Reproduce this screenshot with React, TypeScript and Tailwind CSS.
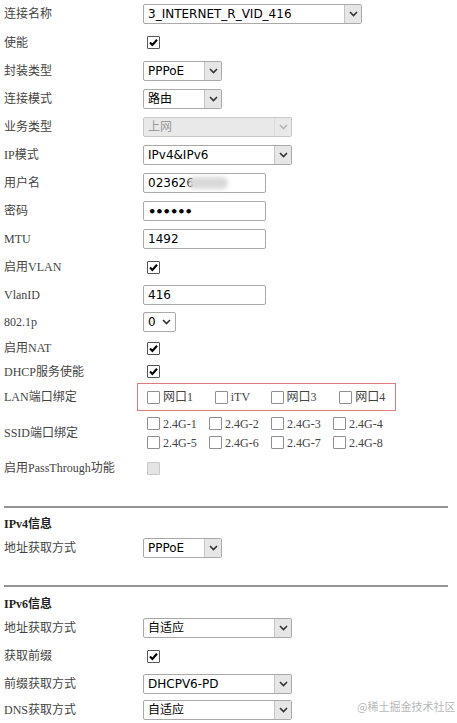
import React from "react";

const labelFont = {
  fontFamily: '"Liberation Serif", "Noto Sans CJK SC", serif',
};
const ctrlFont = {
  fontFamily: '"DejaVu Sans", "Noto Sans CJK SC", sans-serif',
};

function Chevron({ color = "#333" }: { color?: string }) {
  return (
    <svg width="9" height="6" viewBox="0 0 9 6">
      <path d="M1 1 L4.5 4.5 L8 1" fill="none" stroke={color} strokeWidth="1.6" />
    </svg>
  );
}

function Select(props: { value: string; width: string; disabled?: boolean }) {
  return (
    <div
      className={
        "flex h-[20px] items-stretch rounded-[2px] border " +
        props.width +
        (props.disabled
          ? " border-[#c8c8c8] bg-[#e9e9e9] text-[#9a9a9a]"
          : " border-[#a9a9a9] bg-white text-black")
      }
      style={ctrlFont}
    >
      <div className="flex flex-1 items-center pl-[4px] text-[12px] leading-none">
        {props.value}
      </div>
      <div
        className={
          "flex w-[17px] items-center justify-center border-l " +
          (props.disabled
            ? "border-[#dcdcdc] bg-[#e9e9e9]"
            : "border-[#c4c4c4] bg-[#e6e6e6]")
        }
      >
        <Chevron color={props.disabled ? "#b5b5b5" : "#333"} />
      </div>
    </div>
  );
}

function Input(props: { value: string; children?: React.ReactNode }) {
  return (
    <div
      className="relative flex h-[20px] w-[123px] items-center rounded-[2px] border border-[#a9a9a9] bg-white pl-[4px] text-[12px] leading-none text-black"
      style={ctrlFont}
    >
      {props.value}
      {props.children}
    </div>
  );
}

function Check(props: { checked?: boolean; disabled?: boolean; light?: boolean }) {
  const cls = props.disabled
    ? "border-[#c9c9c9] bg-[#e4e4e4]"
    : props.light
    ? "border-[#8f8f8f] bg-white"
    : "border-[#555] bg-white";
  return (
    <div
      className={
        "flex h-[13px] w-[13px] shrink-0 items-center justify-center rounded-[1px] border " +
        cls
      }
    >
      {props.checked && (
        <svg width="11" height="11" viewBox="0 0 11 11">
          <path
            d="M2 5.6 L4.4 8 L9 2.8"
            fill="none"
            stroke="#000"
            strokeWidth="2.1"
          />
        </svg>
      )}
    </div>
  );
}

function Row(props: { label: string; h: string; children?: React.ReactNode; bold?: boolean }) {
  return (
    <div className={"flex items-center " + props.h}>
      <div
        className={
          "w-[139px] shrink-0 text-[12px] " +
          (props.bold ? "font-bold text-[#222]" : "text-[#444]")
        }
        style={labelFont}
      >
        {props.label}
      </div>
      {props.children}
    </div>
  );
}

function BoxItem(props: { label: string; w: string }) {
  return (
    <div className={"flex items-center gap-[3px] " + props.w}>
      <Check light />
      <span className="text-[12px] text-[#444]" style={labelFont}>
        {props.label}
      </span>
    </div>
  );
}

export default function App() {
  const ssid = ["1", "2", "3", "4", "5", "6", "7", "8"];
  return (
    <div className="relative h-[723px] w-[457px] overflow-hidden bg-white pl-[4px]">
      <Row label="连接名称" h="h-[28px]">
        <Select value="3_INTERNET_R_VID_416" width="w-[219px]" />
      </Row>
      <Row label="使能" h="h-[29px]">
        <div className="pl-[4px]">
          <Check checked />
        </div>
      </Row>
      <Row label="封装类型" h="h-[28px]">
        <Select value="PPPoE" width="w-[79px]" />
      </Row>
      <Row label="连接模式" h="h-[28px]">
        <Select value="路由" width="w-[79px]" />
      </Row>
      <Row label="业务类型" h="h-[28px]">
        <Select value="上网" width="w-[149px]" disabled />
      </Row>
      <Row label="IP模式" h="h-[28px]">
        <Select value="IPv4&IPv6" width="w-[149px]" />
      </Row>
      <Row label="用户名" h="h-[28px]">
        <Input value="023626">
          <span className="absolute left-[44px] top-[3px] h-[12px] w-[40px] rounded-full bg-[#d9d9d9] blur-[2px]" />
        </Input>
      </Row>
      <Row label="密码" h="h-[28px]">
        <Input value="">
          <span
            className="text-[13px] font-bold tracking-[-1px]"
            style={{ fontFamily: '"DejaVu Sans", sans-serif' }}
          >
            ••••••
          </span>
        </Input>
      </Row>
      <Row label="MTU" h="h-[28px]">
        <Input value="1492" />
      </Row>
      <Row label="启用VLAN" h="h-[28px]">
        <div className="pl-[4px]">
          <Check checked />
        </div>
      </Row>
      <Row label="VlanID" h="h-[27px]">
        <Input value="416" />
      </Row>
      <Row label="802.1p" h="h-[28px]">
        <div
          className="flex h-[20px] w-[33px] items-center gap-[6px] rounded-[2px] border border-[#a9a9a9] bg-white pl-[4px] text-[12px] leading-none"
          style={ctrlFont}
        >
          0
          <Chevron />
        </div>
      </Row>
      <Row label="启用NAT" h="h-[24px]">
        <div className="pl-[4px]">
          <Check checked />
        </div>
      </Row>
      <Row label="DHCP服务使能" h="h-[23px]">
        <div className="pl-[4px]">
          <Check checked />
        </div>
      </Row>
      <Row label="LAN端口绑定" h="h-[28px]">
        <div className="-ml-[6px] flex h-[28px] w-[259px] items-center border border-[#e07b7b] pl-[9px]">
          <BoxItem label="网口1" w="w-[68px]" />
          <BoxItem label="iTV" w="w-[56px]" />
          <BoxItem label="网口3" w="w-[69px]" />
          <BoxItem label="网口4" w="w-[56px]" />
        </div>
      </Row>
      <Row label="SSID端口绑定" h="h-[43px]">
        <div className="grid grid-cols-[62px_62px_62px_62px] pl-[4px] pt-[2px]">
          {ssid.map((n) => (
            <div key={n} className="h-[19px]">
              <BoxItem label={"2.4G-" + n} w="w-[62px]" />
            </div>
          ))}
        </div>
      </Row>
      <Row label="启用PassThrough功能" h="h-[28px]">
        <div className="pl-[4px]">
          <Check disabled />
        </div>
      </Row>

      <div className="mt-[24px] h-[2px] w-[444px] bg-[#959595]" />
      <div className="mt-[4px]">
        <Row label="IPv4信息" h="h-[24px]" bold />
        <Row label="地址获取方式" h="h-[24px]">
          <Select value="PPPoE" width="w-[79px]" />
        </Row>
      </div>

      <div className="mt-[25px] h-[2px] w-[444px] bg-[#959595]" />
      <div className="mt-[5px]">
        <Row label="IPv6信息" h="h-[24px]" bold />
        <Row label="地址获取方式" h="h-[24px]">
          <Select value="自适应" width="w-[149px]" />
        </Row>
        <Row label="获取前缀" h="h-[32px]">
          <div className="pl-[4px]">
            <Check checked />
          </div>
        </Row>
        <Row label="前缀获取方式" h="h-[24px]">
          <Select value="DHCPV6-PD" width="w-[149px]" />
        </Row>
        <Row label="DNS获取方式" h="h-[28px]">
          <Select value="自适应" width="w-[149px]" />
        </Row>
      </div>

      <div
        className="absolute left-[357px] top-[698px] text-[11px] text-[#b8b8b8]"
        style={{ fontFamily: '"Noto Sans CJK SC", sans-serif' }}
      >
        @稀土掘金技术社区
      </div>
    </div>
  );
}
